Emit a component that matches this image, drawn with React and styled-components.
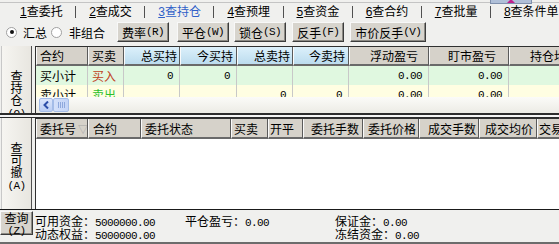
import React from 'react';
import styled, { createGlobalStyle } from 'styled-components';

const GlobalStyle = createGlobalStyle`
  html, body {
    margin: 0;
    padding: 0;
    background: #f0f0ee;
  }
  body {
    font-family: "Noto Sans CJK SC", "Liberation Sans", sans-serif;
    font-size: 12px;
    color: #000;
  }
  * { box-sizing: border-box; }
`;

const Window = styled.div`
  position: relative;
  width: 559px;
  height: 244px;
  overflow: hidden;
  display: flex;
  flex-direction: column;
  background: #f0f0ee;
`;

/* small collapse handle on the top edge */
const Handle = styled.div`
  position: absolute;
  left: 490px;
  top: 0;
  width: 42px;
  height: 4px;
  background: #b0c0d8;
  border: 1px solid #7f90ac;
  border-top: none;
  display: flex;
  justify-content: center;
  z-index: 2;
`;

const HandleArrow = styled.div`
  width: 0;
  height: 0;
  border-left: 4px solid transparent;
  border-right: 4px solid transparent;
  border-bottom: 4px solid #c0208c;
  margin-top: -1px;
`;

const TabBar = styled.div`
  margin-top: 2px;
  border-top: 1px solid #c4c4c4;
  height: 18px;
  padding-left: 20px;
  display: flex;
  align-items: center;
`;

const Tab = styled.div`
  width: 56px;
  line-height: 16px;
  white-space: nowrap;
  color: ${p => (p.$active ? '#2f5fc8' : '#000')};
`;

const Key = styled.span`
  text-decoration: underline;
  font-family: "Liberation Sans", sans-serif;
`;

const TabSep = styled.div`
  width: 1px;
  height: 12px;
  margin-right: 13px;
  background: #505050;
`;

const Toolbar = styled.div`
  height: 24px;
  margin-bottom: 2px;
  padding-left: 6px;
  display: flex;
  align-items: center;
`;

const Radio = styled.span`
  width: 11px;
  height: 11px;
  border-radius: 50%;
  border: 1px solid #a0a0a0;
  background: #fff;
  display: flex;
  align-items: center;
  justify-content: center;
  margin-right: ${p => p.$gap}px;
  &::after {
    content: '';
    width: 4px;
    height: 4px;
    border-radius: 50%;
    background: ${p => (p.$on ? '#111' : 'transparent')};
  }
`;

const RadioLabel = styled.span`
  margin-right: ${p => p.$gap}px;
`;

const Button = styled.div`
  height: 20px;
  padding: 0 4px;
  margin-right: ${p => p.$gap}px;
  display: flex;
  align-items: center;
  background: #d7d4cd;
  border: 1px solid;
  border-color: #f8f8f8 #3c3c3c #3c3c3c #f8f8f8;
  box-shadow: inset -1px -1px 0 #8c8a84;
  white-space: nowrap;
`;

const Panel = styled.div`
  display: flex;
  height: ${p => p.$h}px;
`;

const SideTab = styled.div`
  width: 31px;
  margin-left: 1px;
  margin-right: 3px;
  padding-top: 24px;
  background: linear-gradient(90deg, #f6f5f1, #e8e6e0);
  border-left: 1px solid #c8c8c8;
  border-right: 1px solid #505050;
  display: flex;
  flex-direction: column;
  align-items: center;
  overflow: hidden;
`;

const SideChar = styled.span`
  display: block;
  height: 12px;
  line-height: 12px;
  white-space: nowrap;
  font-size: ${p => (p.$small ? 11 : 12)}px;
`;

const Grid = styled.div`
  flex: 1;
  min-width: 0;
  display: flex;
  flex-direction: column;
  overflow: hidden;
  background: ${p => p.$bg};
  border-left: 1px solid #303030;
  border-top: 1px solid #303030;
`;

const HeadRow = styled.div`
  display: flex;
  height: ${p => p.$h}px;
  flex-shrink: 0;
`;

const HeadCell = styled.div`
  flex: 0 0 ${p => p.$w}px;
  display: flex;
  align-items: center;
  justify-content: ${p => (p.$align === 'right' ? 'flex-end' : 'flex-start')};
  padding: 0 ${p => p.$pr}px 0 ${p => p.$pl}px;
  white-space: nowrap;
  overflow: hidden;
  background: ${p =>
    p.$tone === 'blue' ? 'linear-gradient(#dcf0fb, #bcdcee)' : '#d6d2ca'};
  border-left: 1px solid #fafafa;
  border-right: 1px solid #5a5a5a;
  border-bottom: 2px solid #6a6a6a;
`;

const Sort = styled.span`
  color: #a8a8a8;
  font-size: 10px;
  margin-left: 2px;
`;

const Body = styled.div`
  flex: 1;
  overflow: hidden;
`;

const Row = styled.div`
  display: flex;
  height: 19px;
  background: ${p => p.$bg};
`;

const Cell = styled.div`
  flex: 0 0 ${p => p.$w}px;
  display: flex;
  align-items: center;
  justify-content: ${p => (p.$align === 'right' ? 'flex-end' : 'flex-start')};
  padding: 0 6px 0 4px;
  border-right: 1px solid #c8c8c8;
  white-space: nowrap;
  color: ${p => p.$color || '#000'};
`;

const Num = styled.span`
  font-family: "Liberation Mono", monospace;
  font-size: 11px;
  letter-spacing: -0.6px;
`;

const HScroll = styled.div`
  height: 16px;
  flex-shrink: 0;
  padding: 1px 0 1px 3px;
  display: flex;
  background: linear-gradient(#fbfbf8, #ecebe5);
`;

const ScrollBtn = styled.div`
  width: 14px;
  height: 14px;
  border-radius: 2px;
  border: 1px solid #a4bce8;
  background: linear-gradient(#dce6fb, #bccef4);
  display: flex;
  align-items: center;
  justify-content: center;
`;

const Thumb = styled.div`
  width: 16px;
  height: 14px;
  border-radius: 2px;
  border: 1px solid #a4bce8;
  background: linear-gradient(90deg, #d4e0fa, #c4d4f6);
  display: flex;
  align-items: center;
  justify-content: center;
  gap: 1px;
`;

const Grip = styled.span`
  width: 1px;
  height: 6px;
  background: #8ea8dc;
`;

const Splitter = styled.div`
  height: 5px;
  flex-shrink: 0;
  border-top: 2px solid #2c2c2c;
  border-bottom: 1px solid #2c2c2c;
  background: #f4f4f4;
`;

const LowerBorder = styled.div`
  height: 1px;
  background: #1a1a1a;
`;

const Footer = styled.div`
  flex: 1;
  display: flex;
  border-bottom: 2px solid #6c6c6c;
`;

const QueryButton = styled.div`
  width: 33px;
  height: 24px;
  margin-top: 1px;
  display: flex;
  flex-direction: column;
  align-items: center;
  background: #d7d4cd;
  border: 1px solid;
  border-color: #f8f8f8 #3c3c3c #3c3c3c #f8f8f8;
  box-shadow: inset -1px -1px 0 #8c8a84;
`;

const QueryLine = styled.span`
  display: block;
  height: 11px;
  line-height: 11px;
  white-space: nowrap;
`;

const Info = styled.div`
  margin-left: 2px;
  padding-top: 4px;
  display: grid;
  grid-template-columns: 150px 150px 150px;
  grid-auto-rows: 13px;
  line-height: 13px;
`;

const InfoItem = styled.div`
  white-space: nowrap;
`;

const upperCols = [
  { label: '合约', w: 52, align: 'left', tone: 'gray', pl: 3, pr: 0 },
  { label: '买卖', w: 36, align: 'left', tone: 'gray', pl: 3, pr: 0 },
  { label: '总买持', w: 56, align: 'right', tone: 'blue', pl: 0, pr: 2 },
  { label: '今买持', w: 57, align: 'right', tone: 'blue', pl: 0, pr: 3 },
  { label: '总卖持', w: 56, align: 'right', tone: 'blue', pl: 0, pr: 2 },
  { label: '今卖持', w: 56, align: 'right', tone: 'blue', pl: 0, pr: 3 },
  { label: '浮动盈亏', w: 80, align: 'right', tone: 'gray', pl: 0, pr: 10 },
  { label: '盯市盈亏', w: 80, align: 'right', tone: 'gray', pl: 0, pr: 12 },
  { label: '持仓均价', w: 70, align: 'right', tone: 'gray', pl: 0, pr: 0 },
];

const upperRows = [
  {
    bg: '#e0f8e0',
    cells: ['买小计', { t: '买入', c: '#c0401c' }, '0', '0', '', '', '0.00', '0.00', ''],
  },
  {
    bg: '#fffee2',
    cells: ['卖小计', { t: '卖出', c: '#2cc02c' }, '', '', '0', '0', '0.00', '0.00', ''],
  },
];

const lowerCols = [
  { label: '委托号', w: 52, align: 'left', pl: 3, pr: 0, sort: true },
  { label: '合约', w: 53, align: 'left', pl: 4, pr: 0 },
  { label: '委托状态', w: 90, align: 'left', pl: 3, pr: 0 },
  { label: '买卖', w: 37, align: 'left', pl: 2, pr: 0 },
  { label: '开平', w: 35, align: 'left', pl: 1, pr: 0 },
  { label: '委托手数', w: 60, align: 'right', pl: 0, pr: 3 },
  { label: '委托价格', w: 56, align: 'right', pl: 0, pr: 2 },
  { label: '成交手数', w: 60, align: 'right', pl: 0, pr: 2 },
  { label: '成交均价', w: 58, align: 'right', pl: 0, pr: 3 },
  { label: '交易所', w: 60, align: 'left', pl: 1, pr: 0 },
];

const tabs = ['查委托', '查成交', '查持仓', '查预埋', '查资金', '查合约', '查批量', '查条件单'];

const isNum = s => /^[\d.]+$/.test(s);

function Text({ value }) {
  return isNum(value) ? <Num>{value}</Num> : value;
}

function Label({ text }) {
  // "费率(R)" → CJK part + hotkey part
  const m = text.match(/^(.*)(\(.\))$/);
  if (!m) return text;
  return (
    <>
      {m[1]}
      <Num>{m[2]}</Num>
    </>
  );
}

function SideLabel({ chars, hot }) {
  return (
    <>
      {chars.split('').map((c, i) => (
        <SideChar key={i}>{c}</SideChar>
      ))}
      <SideChar $small>
        <Num>{hot}</Num>
      </SideChar>
    </>
  );
}

export default function App() {
  return (
    <Window>
      <GlobalStyle />
      <Handle>
        <HandleArrow />
      </Handle>

      <TabBar>
        {tabs.map((t, i) => (
          <React.Fragment key={t}>
            <Tab $active={i === 2}>
              <Key>{i + 1}</Key>
              {t}
            </Tab>
            {i < tabs.length - 1 && <TabSep />}
          </React.Fragment>
        ))}
      </TabBar>

      <Toolbar>
        <Radio $on $gap={6} />
        <RadioLabel $gap={4}>汇总</RadioLabel>
        <Radio $gap={7} />
        <RadioLabel $gap={12}>非组合</RadioLabel>
        <Button $gap={8}><Label text="费率(R)" /></Button>
        <Button $gap={5}><Label text="平仓(W)" /></Button>
        <Button $gap={6}><Label text="锁仓(S)" /></Button>
        <Button $gap={6}><Label text="反手(F)" /></Button>
        <Button $gap={0}><Label text="市价反手(V)" /></Button>
      </Toolbar>

      <Panel $h={67}>
        <SideTab>
          <SideLabel chars="查持仓" hot="(Q)" />
        </SideTab>
        <Grid $bg="#f4f4f2">
          <HeadRow $h={19}>
            {upperCols.map(c => (
              <HeadCell key={c.label} $w={c.w} $align={c.align} $tone={c.tone} $pl={c.pl} $pr={c.pr}>
                {c.label}
              </HeadCell>
            ))}
          </HeadRow>
          <Body>
            {upperRows.map((r, ri) => (
              <Row key={ri} $bg={r.bg}>
                {r.cells.map((v, ci) => {
                  const col = upperCols[ci];
                  const t = typeof v === 'object' ? v.t : v;
                  return (
                    <Cell key={ci} $w={col.w} $align={col.align} $color={v.c}>
                      <Text value={t} />
                    </Cell>
                  );
                })}
              </Row>
            ))}
          </Body>
          <HScroll>
            <ScrollBtn>
              <svg width="7" height="8" viewBox="0 0 7 8">
                <path d="M5 0.5 L1.5 4 L5 7.5" fill="none" stroke="#2d4ea8" strokeWidth="2" />
              </svg>
            </ScrollBtn>
            <Thumb>
              <Grip />
              <Grip />
              <Grip />
              <Grip />
            </Thumb>
          </HScroll>
        </Grid>
      </Panel>

      <Splitter />

      <Panel $h={91}>
        <SideTab>
          <SideLabel chars="查可撤" hot="(A)" />
        </SideTab>
        <Grid $bg="#ffffff">
          <HeadRow $h={20}>
            {lowerCols.map(c => (
              <HeadCell key={c.label} $w={c.w} $align={c.align} $tone="gray" $pl={c.pl} $pr={c.pr}>
                {c.label}
                {c.sort && <Sort>▽</Sort>}
              </HeadCell>
            ))}
          </HeadRow>
          <Body />
        </Grid>
      </Panel>
      <LowerBorder />

      <Footer>
        <QueryButton>
          <QueryLine>查询</QueryLine>
          <QueryLine><Num>(Z)</Num></QueryLine>
        </QueryButton>
        <Info>
          <InfoItem>可用资金：<Num>5000000.00</Num></InfoItem>
          <InfoItem>平仓盈亏：<Num>0.00</Num></InfoItem>
          <InfoItem>保证金：<Num>0.00</Num></InfoItem>
          <InfoItem>动态权益：<Num>5000000.00</Num></InfoItem>
          <InfoItem />
          <InfoItem>冻结资金：<Num>0.00</Num></InfoItem>
        </Info>
      </Footer>
    </Window>
  );
}
